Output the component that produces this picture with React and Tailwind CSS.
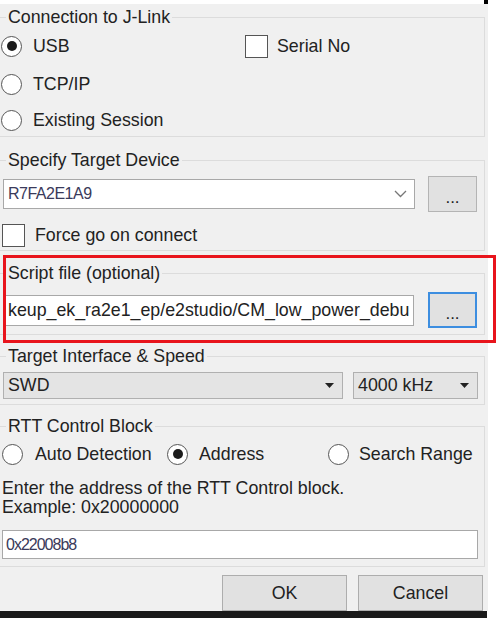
const font = { fontFamily: '"Liberation Sans", Arial, sans-serif' };

const Radio = ({ checked }) => (
    <span className="flex h-[21px] w-[21px] shrink-0 items-center justify-center rounded-full border-[1.5px] border-[#555] bg-white">
        {checked && <span className="h-[10px] w-[10px] rounded-full bg-[#1c1c1c]" />}
    </span>
);

const Check = () => (
    <span className="block h-[23px] w-[23px] shrink-0 border-[1.5px] border-[#555] bg-white" />
);

const Group = ({ title, className, children }) => (
    <fieldset className={`w-[485px] border border-l-0 border-[#dcdcdc] ${className}`}>
        <legend className="ml-[6px] px-[2px] text-[17.8px] leading-[20px]">{title}</legend>
        {children}
    </fieldset>
);

const DotsButton = ({ focused }) => (
    <div
        className={`flex h-[36px] w-[49px] shrink-0 items-center justify-center bg-[#e1e1e1] text-[17px] leading-none ${
            focused ? "border-2 border-[#3d8ee0]" : "border border-[#b4b4b4]"
        }`}
    >
        <span className="mt-[6px]">...</span>
    </div>
);

const Triangle = () => (
    <svg width="9" height="5" viewBox="0 0 9 5" className="shrink-0">
        <path d="M0 0 L9 0 L4.5 5 Z" fill="#222" />
    </svg>
);

export default function App() {
    return (
        <div className="relative flex h-[618px] w-[500px] flex-col bg-white text-[#222]" style={font}>
            {/* top strip */}
            <div className="flex h-[4px] w-full justify-end">
                <div className="mr-[12px] h-[4px] w-[4px] bg-black" />
            </div>

            <div className="flex h-[607px] w-[488px] flex-col bg-[#f0f0f0]">
                <Group title="Connection to J-Link" className="mt-[3px] pb-[3px]">
                    <div className="flex flex-col pt-[6px] text-[17.8px]">
                        <div className="flex h-[26px] items-center">
                            <div className="flex w-[245px] items-center gap-[11px] pl-[1px]">
                                <Radio checked />
                                <span>USB</span>
                            </div>
                            <div className="flex items-center gap-[9px]">
                                <Check />
                                <span>Serial No</span>
                            </div>
                        </div>
                        <div className="mt-[12px] flex h-[26px] items-center gap-[11px] pl-[1px]">
                            <Radio />
                            <span>TCP/IP</span>
                        </div>
                        <div className="mt-[10px] flex h-[26px] items-center gap-[11px] pl-[1px]">
                            <Radio />
                            <span>Existing Session</span>
                        </div>
                    </div>
                </Group>

                <Group title="Specify Target Device" className="mt-[13px] pb-[2px]">
                    <div className="flex flex-col pt-[6px] text-[17.8px]">
                        <div className="flex h-[36px] items-center">
                            <div className="ml-[3px] flex h-[30px] w-[412px] items-center justify-between border border-[#a8a8a8] bg-white pl-[4px] pr-[7px]">
                                <span className="text-[16px] tracking-[-0.5px] text-[#3a3a5a]">R7FA2E1A9</span>
                                <svg width="13" height="8" viewBox="0 0 13 8">
                                    <path d="M1 1 L6.5 6.5 L12 1" fill="none" stroke="#777" strokeWidth="1.3" />
                                </svg>
                            </div>
                            <div className="ml-[13px]">
                                <DotsButton />
                            </div>
                        </div>
                        <div className="mt-[10px] flex h-[26px] items-center gap-[10px] pl-[2px]">
                            <Check />
                            <span>Force go on connect</span>
                        </div>
                    </div>
                </Group>

                <Group title="Script file (optional)" className="mt-[12px] pb-[6px]">
                    <div className="mt-[9px] flex h-[36px] items-center text-[17.8px]">
                        <div className="ml-[3px] flex h-[31px] w-[411px] items-center overflow-hidden border border-[#a8a8a8] bg-white pl-[4px]">
                            <span className="whitespace-nowrap">keup_ek_ra2e1_ep/e2studio/CM_low_power_debu</span>
                        </div>
                        <div className="ml-[14px]">
                            <DotsButton focused />
                        </div>
                    </div>
                </Group>

                <Group title="Target Interface & Speed" className="mt-[11px] pb-[5px]">
                    <div className="mt-[6px] flex h-[27px] items-stretch text-[17.8px]">
                        <div className="ml-[3px] flex w-[340px] items-center justify-between border border-[#b0b0b0] bg-[#e4e4e4] pl-[4px] pr-[8px]">
                            <span>SWD</span>
                            <Triangle />
                        </div>
                        <div className="ml-[10px] flex w-[125px] items-center justify-between border border-[#b0b0b0] bg-[#e4e4e4] pl-[4px] pr-[8px]">
                            <span>4000 kHz</span>
                            <Triangle />
                        </div>
                    </div>
                </Group>

                <Group title="RTT Control Block" className="mt-[11px] pb-[7px]">
                    <div className="flex flex-col text-[17.8px]">
                        <div className="mt-[5px] flex h-[26px] items-center pl-[2px]">
                            <div className="flex w-[165px] items-center gap-[12px]">
                                <Radio />
                                <span>Auto Detection</span>
                            </div>
                            <div className="flex w-[161px] items-center gap-[11px]">
                                <Radio checked />
                                <span>Address</span>
                            </div>
                            <div className="flex items-center gap-[10px]">
                                <Radio />
                                <span>Search Range</span>
                            </div>
                        </div>
                        <div className="mt-[12px] pl-[2px] leading-[19px]">
                            <div>Enter the address of the RTT Control block.</div>
                            <div>Example: 0x20000000</div>
                        </div>
                        <div className="ml-[2px] mt-[13px] flex h-[29px] w-[476px] items-center border border-[#a8a8a8] bg-white pl-[3px]">
                            <span className="text-[16px] tracking-[-1px] text-[#3a3a5a]">0x22008b8</span>
                        </div>
                    </div>
                </Group>

                <div className="mt-[8px] flex justify-end gap-[11px] pr-[5px] text-[17.8px]">
                    <button className="h-[36px] w-[125px] border border-[#adadad] bg-[#e1e1e1]">OK</button>
                    <button className="h-[36px] w-[125px] border border-[#adadad] bg-[#e1e1e1]">Cancel</button>
                </div>
            </div>

            <div className="h-[7px] w-[487px] bg-[#1a1a1a]" />

            {/* red annotation frame */}
            <div className="pointer-events-none absolute left-[3px] top-[255px] h-[88px] w-[493px] border-[3px] border-[#e8141c]" />
        </div>
    );
}
